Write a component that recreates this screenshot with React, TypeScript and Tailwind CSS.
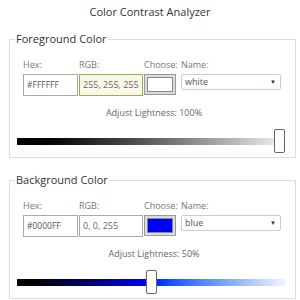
import React from 'react';

type Panel = {
  title: string;
  hex: string;
  rgb: string;
  color: string;
  name: string;
  lightness: number;
  track: string;
  active?: boolean;
};

const panels: Panel[] = [
  {
    title: 'Foreground Color',
    hex: '#FFFFFF',
    rgb: '255, 255, 255',
    color: '#ffffff',
    name: 'white',
    lightness: 100,
    track: 'bg-gradient-to-r from-black to-[#f4f4f4]',
    active: true,
  },
  {
    title: 'Background Color',
    hex: '#0000FF',
    rgb: '0, 0, 255',
    color: '#0000ff',
    name: 'blue',
    lightness: 50,
    track: 'bg-gradient-to-r from-black via-[#0000ff] to-[#f2f2ff]',
  },
];

const ColorPanel: React.FC<{ p: Panel }> = ({ p }) => (
  <fieldset className="mx-[9px] border border-[#dddddd] pl-[5px] pr-[10px]">
    <legend className="px-[1px] text-[11px] leading-[16px] text-[#333]">{p.title}</legend>
    <div className="pl-[8px] pt-[12px]">
      {/* 输入行 */}
      <div className="flex items-start text-[9px] leading-[12px] text-[#777]">
        <div className="flex w-[55px] flex-col">
          <span className="mb-[3px]">Hex:</span>
          <div className="flex h-[22px] items-center border border-[#aaa] pl-[3px] text-[8.5px] text-[#555]">{p.hex}</div>
        </div>
        <div className="ml-[1px] flex w-[64px] flex-col">
          <span className="mb-[3px]">RGB:</span>
          <div
            className={`flex h-[22px] items-center pl-[3px] text-[9px] text-[#666] ${
              p.active ? 'border-[1.5px] border-[#88b84a] bg-[#fdf6e8]' : 'border border-[#aaa]'
            }`}
          >
            {p.rgb}
          </div>
        </div>
        <div className="ml-[1px] flex w-[37px] flex-col">
          <span className="mb-[3px]">Choose:</span>
          <div className="h-[21px] w-[32px] border border-[#9a9a9a] bg-[#dcdcdc] p-[2px]">
            <div className="h-full w-full border border-[#8a8a8a]" style={{ backgroundColor: p.color }} />
          </div>
        </div>
        <div className="flex flex-col">
          <span className="mb-[3px]">Name:</span>
          <div className="flex h-[16px] w-[100px] items-start justify-between rounded-[2px] border border-[#ccc] pl-[3px] pr-[4px] pt-[1px] text-[9px] leading-[12px] text-[#555]">
            <span>{p.name}</span>
            <span className="text-[6px] leading-[12px] text-[#333]">▼</span>
          </div>
        </div>
      </div>

      <div className="mt-[11px] text-center text-[9px] leading-[12px] text-[#666]">
        Adjust Lightness: {p.lightness}%
      </div>

      {/* 亮度滑块 */}
      <div className="relative ml-[-6px] mt-[10px] mb-[4px] flex h-[24px] w-[268px] items-center">
        <div className={`h-[7px] w-full ${p.track}`} />
        <div
          className="absolute top-0 h-[24px] w-[11px] rounded-[2px] border border-[#666] bg-white"
          style={{ left: `${(p.lightness / 100) * 257}px` }}
        />
      </div>
    </div>
  </fieldset>
);

export default function App() {
  return (
    <div className="h-[300px] w-[300px] overflow-hidden bg-white" style={{ fontFamily: '"Open Sans", sans-serif' }}>
      <h1 className="pt-[3px] text-center text-[11px] leading-[18px] text-[#333]">Color Contrast Analyzer</h1>
      <div className="mt-[10px] flex flex-col gap-[14px]">
        {panels.map(p => (
          <ColorPanel key={p.title} p={p} />
        ))}
      </div>
    </div>
  );
}
